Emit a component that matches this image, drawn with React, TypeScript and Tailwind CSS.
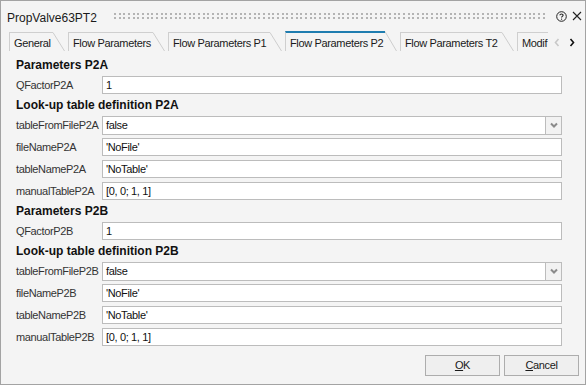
import React from 'react';

type Row = { label: string; value: string; select?: boolean };
type Section = { title: string; rows: Row[] };

const sections: Section[] = [
  { title: 'Parameters P2A', rows: [{ label: 'QFactorP2A', value: '1' }] },
  {
    title: 'Look-up table definition P2A',
    rows: [
      { label: 'tableFromFileP2A', value: 'false', select: true },
      { label: 'fileNameP2A', value: "'NoFile'" },
      { label: 'tableNameP2A', value: "'NoTable'" },
      { label: 'manualTableP2A', value: '[0, 0; 1, 1]' },
    ],
  },
  { title: 'Parameters P2B', rows: [{ label: 'QFactorP2B', value: '1' }] },
  {
    title: 'Look-up table definition P2B',
    rows: [
      { label: 'tableFromFileP2B', value: 'false', select: true },
      { label: 'fileNameP2B', value: "'NoFile'" },
      { label: 'tableNameP2B', value: "'NoTable'" },
      { label: 'manualTableP2B', value: '[0, 0; 1, 1]' },
    ],
  },
];

const tabs = [
  { label: 'General', main: 'w-[44px]' },
  { label: 'Flow Parameters', main: 'w-[85px]' },
  { label: 'Flow Parameters P1', main: 'w-[102px]' },
  { label: 'Flow Parameters P2', main: 'w-[100px]', active: true },
  { label: 'Flow Parameters T2', main: 'w-[102px]' },
  { label: 'Modif', main: 'w-[102px]' },
];

function Dots() {
  const xs: number[] = [];
  for (let i = 0; i <= 92; i++) xs.push(Math.round(i * 4.66));
  return (
    <svg width="432" height="6" className="ml-[15px] shrink-0">
      {xs.map((x) => (
        <g key={x}>
          <rect x={x} y={0} width={2} height={2} fill="#b4b4b4" />
          <rect x={x} y={4} width={2} height={2} fill="#b4b4b4" />
        </g>
      ))}
    </svg>
  );
}

function Tab({ label, main, active }: { label: string; main: string; active?: boolean }) {
  return (
    <div className={`flex shrink-0 mr-[3px] ${active ? 'h-[20px]' : 'h-[19px] mt-[1px]'}`}>
      <div
        className={`${main} shrink-0 border-l border-[#cfcfcf] pl-[4px] flex items-center pt-[2px] whitespace-nowrap overflow-hidden ${
          active ? 'border-t-2 border-t-[#1f7db0]' : 'border-t'
        }`}
      >
        {label}
      </div>
      <svg width="12" height={active ? 20 : 19} className="shrink-0">
        <line x1="0" y1="0.5" x2="11.5" y2={active ? 20 : 19} stroke="#cdcdcd" strokeWidth="1" />
      </svg>
    </div>
  );
}

function Field({ row }: { row: Row }) {
  return (
    <div className="flex items-center h-[22px]">
      <div className="w-[86px] shrink-0 text-[#333333] whitespace-nowrap">{row.label}</div>
      {row.select ? (
        <div className="flex-1 flex h-[19px]">
          <div className="flex-1 border border-[#bcbcbc] bg-white pl-[3px] flex items-center text-[#111111]">
            {row.value}
          </div>
          <div className="w-[16px] border border-l-0 border-[#bcbcbc] bg-[#f2f2f2] flex items-center justify-center">
            <svg width="8" height="6" viewBox="0 0 8 6">
              <polyline points="1,1.5 4,4.5 7,1.5" fill="none" stroke="#8a8a8a" strokeWidth="2" />
            </svg>
          </div>
        </div>
      ) : (
        <div className="flex-1 h-[18px] border border-[#bcbcbc] bg-white pl-[3px] flex items-center text-[#111111] whitespace-nowrap">
          {row.value}
        </div>
      )}
    </div>
  );
}

export default function App() {
  return (
    <div className="w-[586px] h-[385px] border border-[#a3a3a3] bg-[#f4f4f4] flex flex-col font-['Liberation_Sans',Arial,sans-serif] text-[11px] tracking-[-0.35px] text-[#1e1e1e] overflow-hidden">
      {/* title bar */}
      <div className="h-[30px] flex items-center pl-[6px] shrink-0">
        <div className="text-[12px] tracking-normal text-[#1a1a1a] w-[92px] shrink-0 pt-[3px]">PropValve63PT2</div>
        <Dots />
        <svg width="11" height="11" viewBox="0 0 11 11" className="ml-[10px] shrink-0">
          <circle cx="5.5" cy="5.5" r="4.8" fill="none" stroke="#222" strokeWidth="1" />
          <path d="M3.9 4.3 C3.9 2.6 7.1 2.6 7.1 4.3 C7.1 5.4 5.5 5.4 5.5 6.6" fill="none" stroke="#222" strokeWidth="1.1" />
          <rect x="5" y="7.6" width="1.1" height="1.1" fill="#222" />
        </svg>
        <svg width="10" height="10" viewBox="0 0 10 10" className="ml-[5px] shrink-0">
          <path d="M1 1 L9 9 M9 1 L1 9" stroke="#222" strokeWidth="1.1" />
        </svg>
      </div>
      {/* tabs */}
      <div className="h-[20px] flex items-start shrink-0 pl-[8px]">
        <div className="w-[539px] flex overflow-hidden shrink-0 text-[#1a1a1a]">
          {tabs.map((t) => (
            <Tab key={t.label} label={t.label} main={t.main} active={t.active} />
          ))}
        </div>
        <div className="flex items-center h-[20px] pt-[2px]">
          <svg width="6" height="9" viewBox="0 0 6 9" className="ml-[6px]">
            <polyline points="4.5,1 1.5,4.5 4.5,8" fill="none" stroke="#c8c8c8" strokeWidth="1.6" />
          </svg>
          <svg width="6" height="9" viewBox="0 0 6 9" className="ml-[9px]">
            <polyline points="1.5,1 4.5,4.5 1.5,8" fill="none" stroke="#111" strokeWidth="1.6" />
          </svg>
        </div>
      </div>
      {/* content */}
      <div className="flex flex-col pt-[5px] pl-[15px] pr-[23px]">
        {sections.map((s) => (
          <div key={s.title} className="flex flex-col">
            <div className="h-[18px] flex items-center font-bold text-[12px] tracking-normal text-[#111111]">{s.title}</div>
            {s.rows.map((r) => (
              <Field key={r.label} row={r} />
            ))}
          </div>
        ))}
      </div>
      {/* buttons */}
      <div className="flex justify-end gap-[4px] pr-[6px] mt-[7px]">
        <button className="w-[75px] h-[21px] border border-[#adadad] bg-[#efefef] text-[#1a1a1a] flex items-center justify-center">
          <span><span className="underline">O</span>K</span>
        </button>
        <button className="w-[75px] h-[21px] border border-[#adadad] bg-[#efefef] text-[#1a1a1a] flex items-center justify-center">
          <span><span className="underline">C</span>ancel</span>
        </button>
      </div>
    </div>
  );
}
